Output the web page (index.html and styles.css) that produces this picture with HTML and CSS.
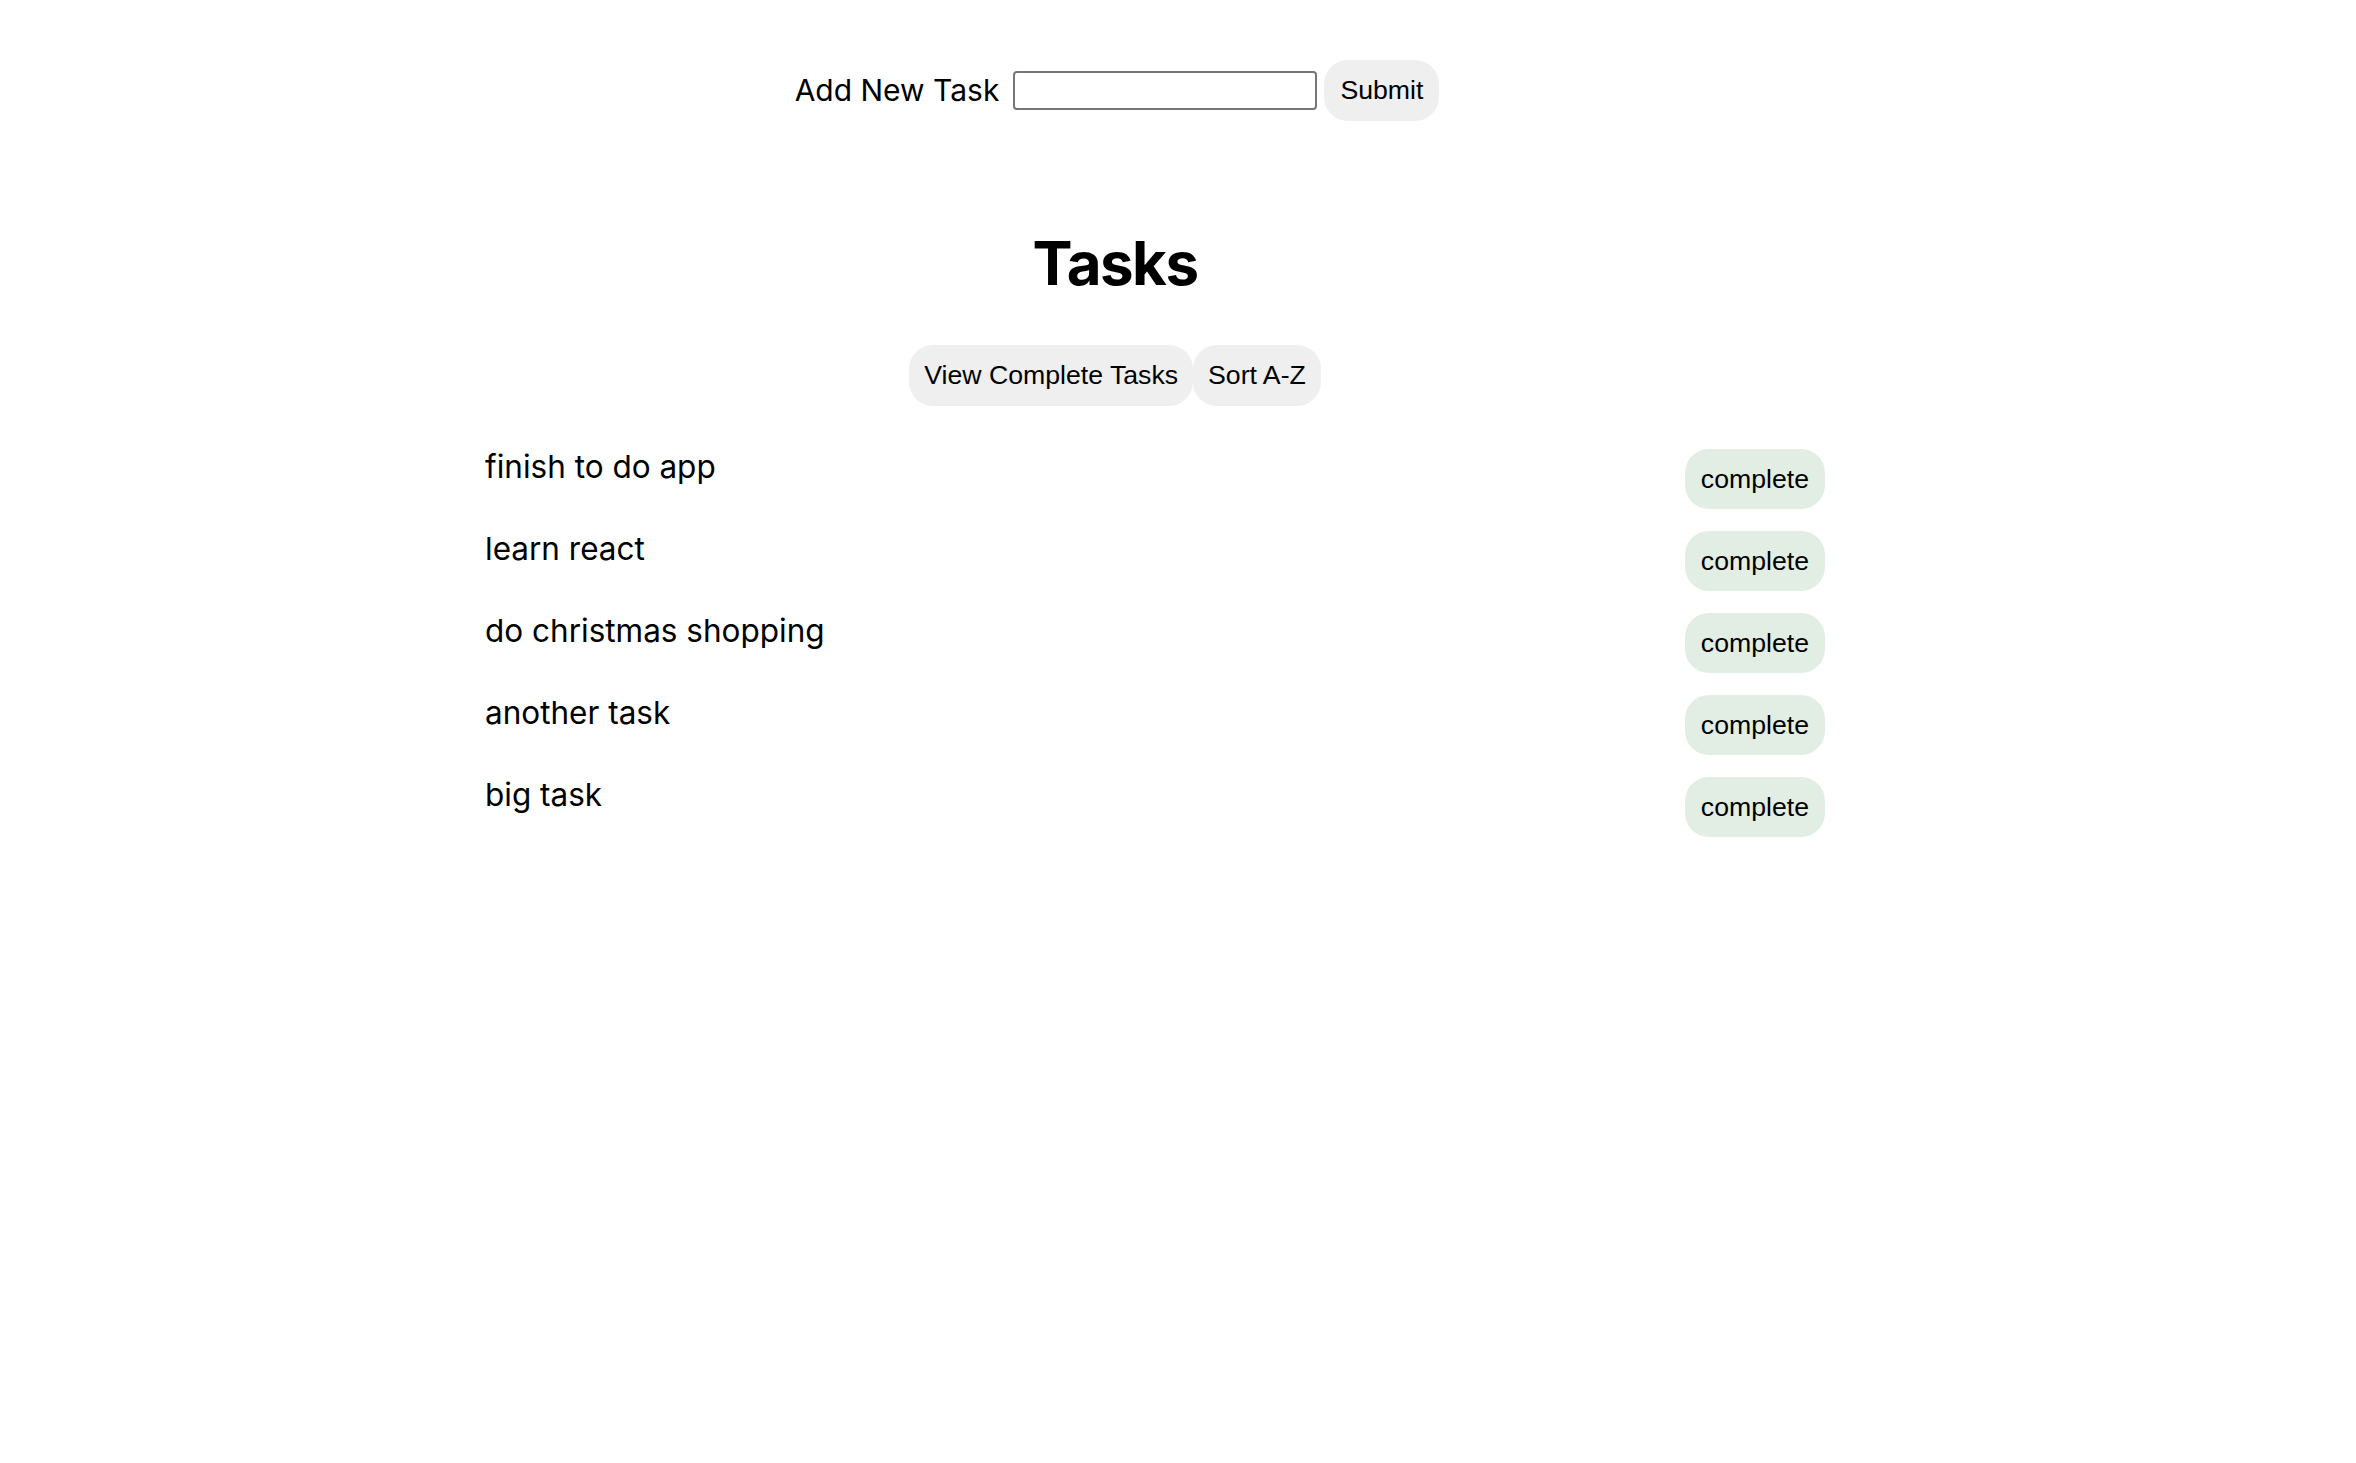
FILE: index.html
```html
<!DOCTYPE html>
<html lang="en">
<head>
<meta charset="utf-8">
<title>Tasks</title>
<link rel="stylesheet" href="styles.css">
</head>
<body>
<div class="app">
  <form class="add-form">
    <label class="add-label" for="task">Add New Task</label>
    <input class="add-input" id="task" type="text">
    <button class="btn" type="button">Submit</button>
  </form>
  <h1 class="title">Tasks</h1>
  <div class="controls">
    <button class="btn" type="button">View Complete Tasks</button>
    <button class="btn" type="button">Sort A-Z</button>
  </div>
  <ul class="tasks">
    <li class="task"><span class="task-name">finish to do app</span><button class="btn btn-complete" type="button">complete</button></li>
    <li class="task"><span class="task-name">learn react</span><button class="btn btn-complete" type="button">complete</button></li>
    <li class="task"><span class="task-name">do christmas shopping</span><button class="btn btn-complete" type="button">complete</button></li>
    <li class="task"><span class="task-name">another task</span><button class="btn btn-complete" type="button">complete</button></li>
    <li class="task"><span class="task-name">big task</span><button class="btn btn-complete" type="button">complete</button></li>
  </ul>
</div>
</body>
</html>
```

FILE: styles.css
```css
html, body {
  margin: 0;
  padding: 0;
  background: #ffffff;
}

body {
  font-family: Inter, "Noto Sans", sans-serif;
  color: #000000;
}

.app {
  width: 1420px;
  margin-left: 405px;
  padding-top: 60px;
}

.add-form {
  display: flex;
  justify-content: center;
  align-items: center;
  padding-left: 4px;
}

.add-label {
  font-size: 30px;
  margin-right: 14px;
  margin-bottom: 2px;
}

.add-input {
  box-sizing: border-box;
  width: 304px;
  height: 39px;
  border: 2px solid #767676;
  border-radius: 4px;
  background: #ffffff;
  margin: 0 7px 0 0;
  padding: 0 4px;
  font-size: 26px;
}

.btn {
  box-sizing: border-box;
  height: 61px;
  padding: 0 15px;
  border: none;
  border-radius: 24px;
  background: #efefef;
  font-family: "Liberation Sans", Arial, sans-serif;
  font-size: 26.67px;
  color: #000000;
}

.add-form .btn {
  padding: 0 16px;
}

.title {
  margin: 105px 0 0 0;
  font-size: 60px;
  line-height: 74px;
  font-weight: 700;
  text-align: center;
  letter-spacing: -1.5px;
}

.controls {
  display: flex;
  justify-content: center;
  margin-top: 45px;
}

.tasks {
  list-style: none;
  margin: 43px 0 0 0;
  padding: 0 0 0 80px;
  display: flex;
  flex-direction: column;
  gap: 22px;
}

.task {
  display: flex;
  justify-content: space-between;
  align-items: flex-start;
}

.task-name {
  font-size: 31.5px;
  line-height: 36px;
}

.btn-complete {
  height: 60px;
  padding: 0 16px;
  background: #e2ede4;
}
```
